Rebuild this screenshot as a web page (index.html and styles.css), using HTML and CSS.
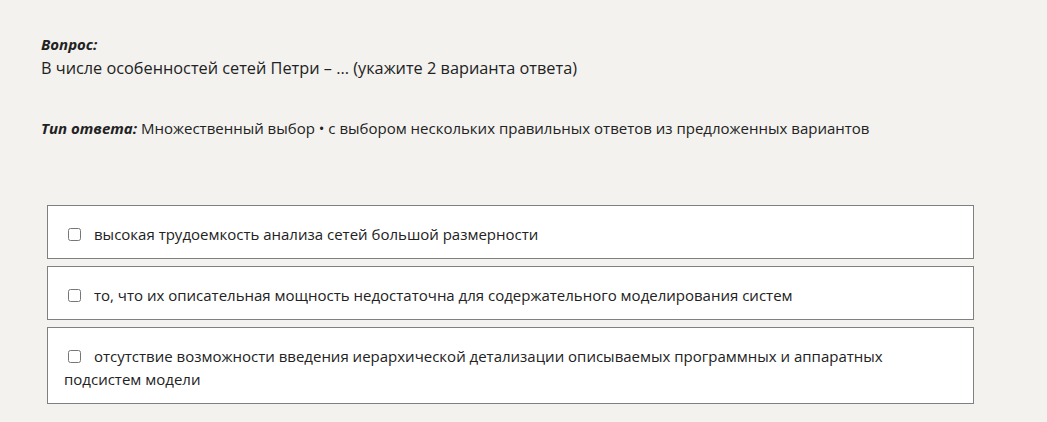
FILE: index.html
```html
<!DOCTYPE html>
<html lang="ru">
<head>
<meta charset="utf-8">
<link rel="stylesheet" href="styles.css">
</head>
<body>
<div class="page">
  <div class="question">
    <div class="label">Вопрос:</div>
    <div class="qtext">В числе особенностей сетей Петри – ... (укажите 2 варианта ответа)</div>
  </div>
  <div class="type"><span class="label">Тип ответа:</span> Множественный выбор • с выбором нескольких правильных ответов из предложенных вариантов</div>
  <div class="answers">
    <div class="answer"><input type="checkbox" class="cb"><span class="atext">высокая трудоемкость анализа сетей большой размерности</span></div>
    <div class="answer"><input type="checkbox" class="cb"><span class="atext">то, что их описательная мощность недостаточна для содержательного моделирования систем</span></div>
    <div class="answer"><input type="checkbox" class="cb"><span class="atext">отсутствие возможности введения иерархической детализации описываемых программных и аппаратных подсистем модели</span></div>
  </div>
</div>
</body>
</html>
```
FILE: styles.css
```css
html, body {
  margin: 0;
  padding: 0;
  background: #f3f2ef;
}
body {
  font-family: "Open Sans", "Noto Sans", sans-serif;
  font-size: 15px;
  color: #222;
}
.page {
  padding: 32px 41px 0 41px;
  width: 932px;
}
.label {
  font-weight: 700;
  font-style: italic;
  font-size: 15px;
}
.question {
  line-height: 24px;
}
.qtext {
  font-size: 16.3px;
}
.type {
  margin-top: 36px;
  line-height: 24px;
}
.answers {
  margin-top: 65px;
  margin-left: 6px;
  width: 927px;
  display: flex;
  flex-direction: column;
  gap: 7px;
}
.answer {
  background: #fff;
  border: 1px solid #808080;
  padding: 17px 16px 12px 16px;
  line-height: 23px;
}
.cb {
  width: 13px;
  height: 13px;
  margin: 0 13px 0 4px;
  vertical-align: -1px;
}
```
